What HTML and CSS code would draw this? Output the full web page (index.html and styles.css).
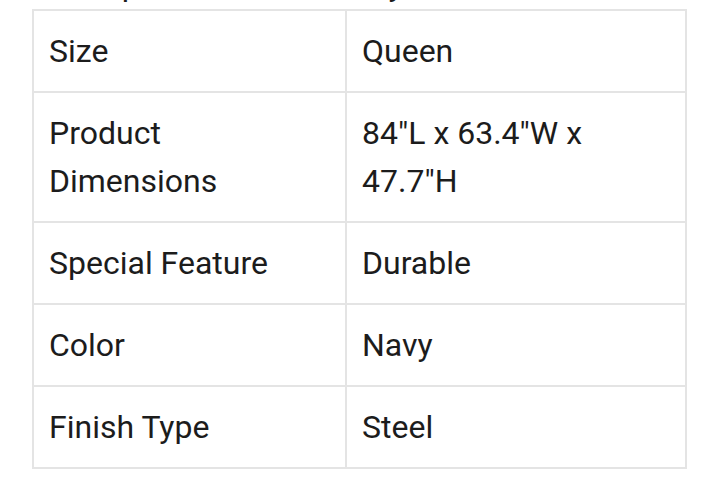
FILE: index.html
```html
<!DOCTYPE html>
<html lang="en">
<head>
<meta charset="utf-8">
<title>Specifications</title>
<link rel="stylesheet" href="styles.css">
</head>
<body>
<main class="page">
  <h2 class="intro">Description of the table by</h2>
  <table class="specs">
    <colgroup>
      <col class="col-key">
      <col class="col-val">
    </colgroup>
    <tbody>
      <tr><td>Size</td><td>Queen</td></tr>
      <tr><td>Product Dimensions</td><td>84"L x 63.4"W x 47.7"H</td></tr>
      <tr><td>Special Feature</td><td>Durable</td></tr>
      <tr><td>Color</td><td>Navy</td></tr>
      <tr><td>Finish Type</td><td>Steel</td></tr>
    </tbody>
  </table>
</main>
</body>
</html>
```

FILE: styles.css
```css
html, body {
  margin: 0;
  padding: 0;
  background: #ffffff;
}

body {
  font-family: Roboto, "Liberation Sans", Arial, sans-serif;
  color: #1c1c1c;
  overflow: hidden;
}

.page {
  padding-left: 32px;
  width: 655px;
}

.intro {
  margin: -39px 0 0 0;
  font-size: 32px;
  line-height: 48px;
  font-weight: 400;
  white-space: nowrap;
}

.specs {
  width: 655px;
  table-layout: fixed;
  border-collapse: collapse;
  font-size: 32px;
  line-height: 48px;
}

.col-key {
  width: 313px;
}

.specs td {
  border: 2px solid #e4e4e4;
  padding: 16px 15px 16px 15px;
  vertical-align: top;
}
```
